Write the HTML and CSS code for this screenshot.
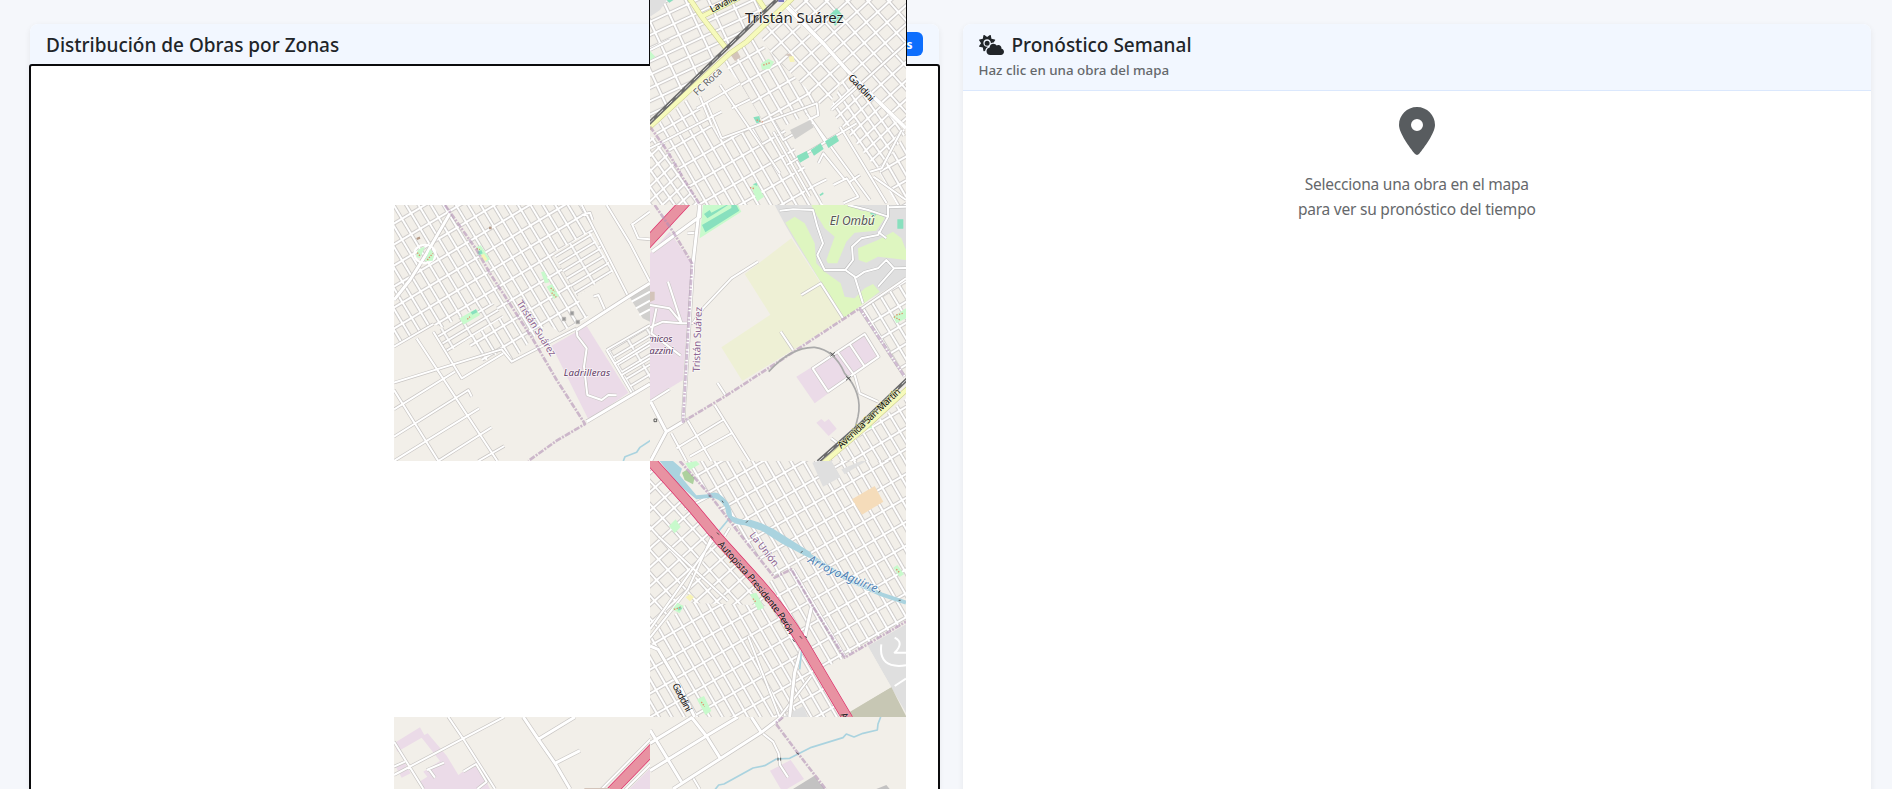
FILE: index.html
```html
<!DOCTYPE html>
<html lang="es">
<head>
<meta charset="utf-8">
<title>Distribución de Obras por Zonas</title>
<link rel="stylesheet" href="styles.css">
</head>
<body>
<svg class="defs" width="0" height="0" aria-hidden="true">
  <defs>
    <pattern id="blocks" width="33" height="62" patternUnits="userSpaceOnUse" patternTransform="rotate(-30)"><rect class="gap" width="33" height="62"/><rect class="block" x="4.500" y="4.500" width="24" height="53"/></pattern>
    <pattern id="blocks-b" width="32" height="54" patternUnits="userSpaceOnUse" patternTransform="translate(8 10) rotate(-31)"><rect class="gap" width="32" height="54"/><rect class="block" x="4.500" y="4.500" width="23" height="45"/></pattern>
    <pattern id="squares" width="46" height="42" patternUnits="userSpaceOnUse" patternTransform="rotate(-42)"><rect class="gap" width="46" height="42"/><rect class="block" x="4.500" y="4.500" width="37" height="33"/></pattern>
    <pattern id="small" width="30" height="33" patternUnits="userSpaceOnUse" patternTransform="rotate(-43) skewX(-8)"><rect class="gap" width="30" height="33"/><rect class="block" x="4.500" y="4.500" width="21" height="24"/></pattern>
    <pattern id="wide" width="62" height="36" patternUnits="userSpaceOnUse" patternTransform="rotate(-25)"><rect class="gap" width="62" height="36"/><rect class="block" x="4.500" y="4.500" width="53" height="27"/></pattern>
    <pattern id="thin" width="66" height="25" patternUnits="userSpaceOnUse" patternTransform="rotate(-31)"><rect class="gap" width="66" height="25"/><rect class="block" x="4" y="4" width="58" height="17"/></pattern>

    <path id="roads-a" d="M430 10L500 80L550 130L620 210L700 290L798 385"/>
    <path id="lanes-a" d="M30 150L90 120M170 325L300 250M200 310L245 415M245 415L530 310L535 345L505 360M275 325L330 298M180 290L215 375M30 445L245 335M390 350L430 420L520 368L555 425M240 255L420 520M500 340L690 600M575 330L798 130M600 380L740 610M440 495L650 370M690 515L725 505L785 390M700 530L798 600M535 490L550 460L615 540M580 555L620 535L655 590L610 610M630 545L660 525M520 558L560 538M400 395L510 590"/>
    <path id="roads-b" d="M180 40L110 160L60 240L12 300M780 250L715 290L560 390M780 552L590 665"/>
    <path id="lanes-b" d="M560 390L562 408L590 445L582 500L592 585L635 600L655 585L680 586M12 440L130 372M12 548L335 448L365 485L560 385M12 628L195 515M12 710L235 570L245 590M12 783L268 625M145 783L305 682M265 783L343 738M80 415L322 783M12 570L145 783M130 395L215 535L340 460M575 45L600 38L608 60M650 15L720 130L780 245M575 15L715 290M725 70L745 115L780 118M725 75L780 35M610 290L625 285L645 330M650 450L725 578M650 450L780 375M675 490L780 425M695 525L780 475"/>
    <path id="roads-c" d="M155 15L135 190L105 665L55 695L8 783M8 605L55 695M12 155L155 50L155 15"/>
    <path id="lanes-c" d="M135 370L165 325L250 235L330 185M135 370L100 370L45 365L6 382M60 245L100 368M6 315L65 325L100 368M6 605L65 568M98 467L10 400L25 325M118 100L145 98M460 285L518 250L585 355M398 395L435 450M208 548L232 585M494 505L650 402L692 470L540 575ZM570 458L618 525M605 432L650 500M200 615L305 783M115 655L190 783M70 700L115 783M85 745L225 660M125 770L250 700M550 715L575 735M620 525L635 580L690 605M635 330L774 235M635 325L770 530"/>
    <path id="park-c" d="M395 32L435 28L495 30L508 80L525 130L508 165L530 210L592 210L620 230L645 310M592 210L615 180L612 140L640 115L690 105L720 50L720 15M620 235L650 215L690 205L715 180L738 205L690 260M738 205L774 204M690 95L715 115M600 15L660 30L720 50M720 22L774 20"/>
    <path id="roads-d" d="M6 570L30 580L95 690L140 783M490 455L470 545L440 650L425 783"/>
    <path id="lanes-d" d="M190 245L120 400L6 545M200 245L6 520M30 240L240 435M190 245L410 460M245 215L230 240M435 340L590 600M470 545L600 783M395 783L490 660M110 160L185 120M300 540L395 783"/>
    <path id="lanes-e" d="M175 21L225 95L315 237M12 195L342 21M12 95L100 237M12 170L45 155M115 175L135 203M110 180L162 158M220 185L258 162L290 215L262 237"/>
    <path id="roads-e" d="M400 21L445 88L495 160L540 237M445 88L555 21M495 160L570 122"/>
    <path id="roads-f" d="M6 182L175 78L270 21M75 237L340 67L400 21M130 21L175 78L215 142M6 60L100 215M6 100L135 21M310 21L340 67"/>
    <path id="lanes-f" d="M135 203L155 237M340 67L375 95L392 130L396 165L420 202"/>
  </defs>
</svg>

<main class="dashboard">
  <section class="card">
    <header class="card-header">
      <h2 class="card-title title-map">Distribución de Obras por Zonas</h2>
      <span class="badge">s</span>
    </header>
    <div class="map" tabindex="0">
      <div class="spill"></div>

      <svg class="tile tile-a" viewBox="30 -153 768 768">
        <rect class="land" x="30" y="-153" width="768" height="768"/>
        <path fill="url(#wide)" d="M30 0H410L30 360Z"/>
        <path fill="url(#squares)" d="M440 0H798V380L600 200L440 20Z"/>
        <path fill="url(#squares)" d="M430 30L620 210L560 330L420 200L350 90Z"/>
        <path fill="url(#blocks)" d="M250 190L340 110L535 300L500 345L390 400L300 250Z"/>
        <path fill="url(#small)" d="M620 210L798 395L720 520L570 330Z"/>
        <path fill="url(#blocks)" d="M40 385L150 290L215 375L245 415L410 345L540 590L550 615H180Z"/>
        <path fill="url(#small)" d="M30 410L70 420L180 615H30Z"/>
        <path fill="url(#blocks)" d="M720 520L798 400V615H770Z"/>
        <path class="gray" d="M30 -20H95L60 30L30 50Z"/>
        <use href="#lanes-a" class="lane-case"/><use href="#lanes-a" class="lane"/>
        <use href="#roads-a" class="road-case"/><use href="#roads-a" class="road wide"/>
        <path class="teal" d="M80 0H100L88 8ZM568 45L590 25L612 50L585 78ZM470 468L500 453L508 472L480 488ZM512 450L542 430L551 447L522 467ZM555 424L588 404L597 423L565 444ZM538 584L549 577L551 582L541 588Z"/>
        <path class="garden" d="M30 153L46 170L30 180ZM362 192L385 176L402 185L390 206L366 209ZM333 560L350 550L372 590L352 604Z"/>
        <path class="teal" d="M340 352L358 348L362 366L350 370ZM338 553L350 548L352 558Z"/>
        <path class="speckle" d="M370 195L392 188M350 360L368 366M330 563L344 566"/>
        <path class="built" d="M272 165L290 150L302 172L285 183ZM435 165L450 160L458 172Z"/>
        <path class="darkgray" d="M450 390L510 360L521 382L465 418Z"/>
        <path class="yellow-case" d="M145 -10L185 50L262 150M185 50L300 -8M350 -10L380 35M25 385L270 160L320 125L460 -8"/>
        <path class="yellow" d="M145 -10L185 50L262 150M185 50L300 -8M350 -10L380 35M25 385L270 160L320 125L460 -8"/>
        <path class="rail" d="M25 372L420 -10"/><path class="rail-dash" d="M25 372L420 -10"/>
        <path class="station" d="M415 -5H432V6H415Z"/>
        <path class="border" d="M30 380L80 450L130 535L180 615"/>
        <path class="sand" d="M446 170L460 168L464 185L450 186Z"/>
        <text class="city" x="315" y="69" textLength="296">Tristán Suárez</text>
        <text class="street-name" transform="translate(216 38) rotate(-27)" textLength="86">Lavalle</text>
        <text class="rail-name" transform="translate(172 289) rotate(-44)" textLength="106">FC Roca</text>
        <text class="street-name" transform="translate(623 234) rotate(47)" textLength="99">Gaddini</text>
      </svg>

      <svg class="tile tile-b" viewBox="12 15 768 768">
        <rect class="land" x="12" y="15" width="768" height="768"/>
        <path fill="url(#blocks-b)" d="M12 15H575L670 215L560 290L595 350L510 398L470 370L365 485L340 450L280 485L235 430L215 405L130 372L12 440Z"/>
        <path fill="url(#thin)" d="M490 160L600 95L670 215L560 290ZM130 400L260 320L310 310L340 350L170 460Z"/>
        <path fill="url(#thin)" d="M650 450L780 372V550L725 578Z"/>
        <path class="darkgray" d="M718 290L780 258V365L758 355Z"/>
        <path class="purple" d="M485 437L590 378L715 578L596 660Z"/>
        <use href="#lanes-b" class="lane-case"/><use href="#lanes-b" class="lane"/>
        <use href="#roads-b" class="road-case"/><use href="#roads-b" class="road"/>
        <ellipse class="lane" cx="105" cy="162" rx="32" ry="28"/>
        <path class="garden" d="M105 140Q75 145 80 172L90 174ZM120 148Q137 160 128 182L104 184ZM258 142L272 136L300 178L288 187ZM453 217L463 214L478 247L465 250ZM470 260L486 252L507 288L492 297ZM209 355L258 327L270 345L220 374Z"/>
        <path class="teal" d="M262 155L274 150L278 160L267 165ZM242 337L258 328L262 337L247 344Z"/>
        <path class="sand" d="M272 166L282 162L292 178L285 184Z"/>
        <path class="speckle" d="M82 158L90 168M112 180L128 160M260 146L270 149M482 264L495 275M485 278L499 292M232 358L240 350"/>
        <path class="pit" d="M517 352H527V362H517ZM541 335H551V345H541ZM558 361H568V371H558Z"/>
        <path class="lane" d="M725 305L780 275M738 325L780 302M748 345L780 328"/>
        <path class="dot" d="M80 117L90 113M297 84H305"/>
        <path class="border" d="M165 15L260 150L300 220L430 420L500 540L585 672L500 722L415 783"/>
        <path class="water-line" d="M700 783L705 770L740 757L750 742L782 721"/>
        <text class="district" transform="translate(379 309) rotate(57.5)" textLength="192">Tristán Suárez</text>
        <text class="zone" x="521" y="528" textLength="139">Ladrilleras</text>
      </svg>

      <svg class="tile tile-c" viewBox="6 15 768 768">
        <rect class="land" x="6" y="15" width="768" height="768"/>
        <path class="gray" d="M380 15H774V233L645 310L590 355L505 225L435 115L412 75Z"/>
        <path class="green" d="M412 68L440 50L470 70L500 130L505 190L530 215L578 250L590 290L620 295L650 265L675 252L695 275L585 356L510 232ZM490 15H600L640 32L690 35L710 55L685 92L620 98L595 125L568 190L540 190L535 180L560 110L530 85L500 35ZM630 145L690 120L735 95L760 115L774 150V180L730 175L690 170L655 188L632 180Z"/>
        <path class="farm" d="M290 222L430 115L515 245L585 355L435 450L283 543L220 442L367 344Z"/>
        <path class="purple" d="M6 160L65 95L130 190L105 540L6 600Z"/>
        <path class="purple" d="M445 530L650 402L692 470L500 610ZM505 668L520 657L530 666L542 657L566 686L542 708Z"/>
        <path fill="url(#blocks-b)" d="M635 325L774 235V525Z"/>
        <path fill="url(#blocks-b)" d="M774 595V783H545Z"/>
        <path class="garden" d="M165 15H270L280 35L155 115ZM735 350L774 325V355L745 370ZM652 672L668 650L672 685L655 685Z"/>
        <path class="teal" d="M168 42L185 30L190 38L235 15H240L205 38L178 55ZM162 75L250 24L250 15H265L274 32L172 97ZM748 58H766V86H748ZM665 40L690 35L680 50Z"/>
        <path class="built" d="M6 275H20V300L6 306Z"/>
        <use href="#park-c" class="park-case"/><use href="#park-c" class="park"/>
        <use href="#lanes-c" class="lane-case"/><use href="#lanes-c" class="lane"/>
        <use href="#roads-c" class="road-case"/><use href="#roads-c" class="road"/>
        <path class="highway-case" d="M-10 138L122 -5"/><path class="highway" d="M-10 138L122 -5"/>
        <path class="border" d="M20 15L75 95L132 190L120 400L105 665L230 590L430 460L635 325L770 530"/>
        <path class="siding" d="M362 515Q430 440 500 442Q560 450 590 520Q645 580 630 650L620 690"/>
        <path class="yellow-case" d="M525 790L660 675L780 565"/><path class="yellow" d="M525 790L660 675L780 565"/>
        <path class="rail" d="M510 785L640 670L780 535"/><path class="rail-dash" d="M510 785L640 670L780 535"/>
        <path class="cross" d="M547 457L561 469M561 457L547 469M594 529L608 541M608 529L594 541M18 657H26V665H18Z"/>
        <path class="speckle" d="M738 350L756 360M745 345L765 340"/>
        <text class="zone large" x="545" y="74" textLength="135">El Ombú</text>
        <text class="zone" x="73" y="427" text-anchor="end">Químicos</text>
        <text class="zone" x="75" y="463" text-anchor="end">Mazzini</text>
        <text class="district" transform="translate(155 517) rotate(-88)" textLength="196">Tristán Suárez</text>
        <text class="street-name yellow-halo" transform="translate(580 747) rotate(-43.5)" textLength="247">Avenida San Martín</text>
      </svg>

      <svg class="tile tile-d" viewBox="6 15 768 768">
        <rect class="land" x="6" y="15" width="768" height="768"/>
        <path fill="url(#blocks)" d="M110 15H774V500L590 605L435 340L385 365L240 190Z"/>
        <path fill="url(#squares)" d="M6 35L200 250L120 400L6 540Z"/>
        <path fill="url(#squares)" d="M200 250L400 450L250 500L90 470Z"/>
        <path fill="url(#blocks)" d="M6 540L120 440L400 450L600 783H6Z"/>
        <path fill="url(#blocks)" d="M350 385L435 340L590 605L500 650Z"/>
        <path class="gray" d="M493 20L510 15H550L578 63L525 92ZM580 40L640 15H655L590 55ZM405 783L465 750L480 783ZM660 570L774 505V770L730 695Z"/>
        <path class="khaki" d="M605 768L730 693L774 780V783H612Z"/>
        <path class="orange" d="M612 130L680 90L706 137L642 176Z"/>
        <path class="land" d="M530 645L660 572L730 693L605 766Z"/>
        <use href="#lanes-d" class="lane-case"/><use href="#lanes-d" class="lane"/>
        <use href="#roads-d" class="road-case"/><use href="#roads-d" class="road"/>
        <path class="garden" d="M112 22L145 15L155 25L125 42ZM63 210L83 190L98 213L80 232ZM306 415L325 410L348 455L330 463ZM147 730L168 720L190 765L172 777ZM73 460L88 440L107 450L95 472ZM736 335L748 327L768 355L755 363Z"/>
        <path class="wood" d="M102 50L115 42L140 65L135 85L110 72Z"/>
        <path class="sand" d="M113 424L126 414L138 424L126 436Z"/>
        <path class="teal" d="M88 455L98 450L102 458L92 464Z"/>
        <path class="speckle" d="M78 460L100 454M315 428L325 440M160 738L170 752M745 340L755 350"/>
        <path class="park" d="M740 545Q770 560 740 590L774 590M700 565Q690 640 774 628M740 690L774 668"/>
        <path class="water" d="M35 15H75L102 38L95 58L145 118L180 115Q205 103 218 118Q250 140 252 180Q280 195 310 192Q360 205 410 240L490 290L482 305L400 262L340 224L290 208Q235 205 232 155Q215 125 190 125L145 130L90 85Z"/>
        <path class="water-line" d="M240 192L210 228M465 540L455 640"/>
        <path class="river" d="M480 295L550 340L600 370L700 415L774 440"/>
        <path class="border" d="M95 15L180 110L280 240L380 365L430 340L500 460L590 605L774 497"/>
        <path class="highway-case" d="M0 5L130 150L215 252L320 368Q400 455 470 570L600 790"/>
        <path class="highway" d="M0 5L130 150L215 252L320 368Q400 455 470 570L600 790"/>
        <path class="cross" d="M188 240L196 248M206 230L214 236M434 550L440 558M455 540L462 548M472 540L476 546M182 120H188M222 134L226 140M294 200L300 194M458 290L464 286M692 410L696 404M752 433H758"/>
        <text class="district" transform="translate(303 238) rotate(52)" textLength="122">La Unión</text>
        <text class="water-name" transform="translate(478 318) rotate(27)" textLength="108">Arroyo</text>
        <text class="water-name" transform="translate(578 365) rotate(23)" textLength="114">Aguirre</text>
        <text class="street-name" transform="translate(208 266) rotate(48.5)" textLength="124">Autopista</text>
        <text class="street-name" transform="translate(296 364) rotate(51)" textLength="140">Presidente</text>
        <text class="street-name" transform="translate(387 477) rotate(58)" textLength="70">Perón</text>
        <text class="street-name" transform="translate(72 688) rotate(62)" textLength="92">Gaddini</text>
        <text class="street-name" transform="translate(576 776) rotate(62)">Autopista</text>
      </svg>

      <svg class="tile tile-e" viewBox="12 21 768 768">
        <rect class="land" x="12" y="21" width="768" height="768"/>
        <path class="purple" d="M12 100L90 52L103 75L113 70L170 137L205 195L260 155L300 237H95L88 215L112 200L100 185L150 153L95 83L22 125ZM18 172L45 160L62 190L35 203ZM780 175V260H695Z"/>
        <use href="#lanes-e" class="lane-case"/><use href="#lanes-e" class="lane"/>
        <use href="#roads-e" class="road-case"/><use href="#roads-e" class="road"/>
        <path class="lane-case" d="M632 240L790 80M705 240L790 155"/><path class="lane" d="M632 240L790 80M705 240L790 155"/>
        <path class="highway-case" d="M640 270L800 105"/><path class="highway" d="M640 270L800 105"/>
        <path class="built" d="M583 234H660V240H583Z"/>
      </svg>

      <svg class="tile tile-f" viewBox="6 21 768 768">
        <rect class="land" x="6" y="21" width="768" height="768"/>
        <path class="purple" d="M366 182L428 150L468 207L412 240H400ZM6 172V240Z"/>
        <path class="industrial" d="M435 237L498 198L530 237ZM685 237L715 225L725 237Z"/>
        <use href="#lanes-f" class="lane-case"/><use href="#lanes-f" class="lane"/>
        <use href="#roads-f" class="road-case"/><use href="#roads-f" class="road"/>
        <path class="water-line" d="M200 240L212 225L228 222L315 174L350 167L385 147L425 145L490 112L585 83L595 72L618 81L645 70L688 60L690 42L698 21"/>
        <path class="border" d="M405 21L383 40L450 130L535 240"/>
        <path class="cross" d="M390 143V152M398 143V152M445 128L453 133"/>
      </svg>
    </div>
  </section>

  <section class="card">
    <header class="card-header stacked">
      <h2 class="card-title">
        <svg class="cloud-sun" viewBox="0 0 640 512"><path d="M294.200 1.200c5.100 2.100 8.700 6.700 9.600 12.100l14.100 84.700 84.700 14.100c5.400 .9 10 4.500 12.100 9.600s1.500 10.900-1.600 15.400l-38.500 55c-2.200-.1-4.400-.2-6.700-.2-23.300 0-45.100 6.200-64 17.100l0-1.100c0-53-43-96-96-96s-96 43-96 96 43 96 96 96c8.100 0 15.900-1 23.400-2.900-36.600 18.100-63.300 53.100-69.800 94.900l-24.400 17c-4.500 3.200-10.300 3.800-15.400 1.600s-8.700-6.700-9.600-12.100L98.100 317.900 13.400 303.800c-5.400-.9-10-4.500-12.100-9.600s-1.500-10.900 1.600-15.400L52.500 208 2.900 137.200c-3.200-4.500-3.800-10.300-1.600-15.400s6.700-8.700 12.100-9.600L98.100 98.100l14.100-84.700c.9-5.400 4.500-10 9.600-12.100s10.900-1.500 15.400 1.600L208 52.500 278.800 2.900c4.500-3.200 10.300-3.800 15.400-1.700zM144 208a64 64 0 1 1 128 0 64 64 0 1 1-128 0zM639.900 431.900c0 44.200-35.800 80-80 80H288c-53 0-96-43-96-96 0-47.600 34.600-87 80-94.600V320c0-53 43-96 96-96 34.900 0 65.400 18.600 82.200 46.400 13-9.100 28.800-14.400 45.800-14.400 44.200 0 80 35.800 80 80 0 5.900-.6 11.700-1.900 17.200 37.400 6.700 65.800 39.400 65.800 78.700z"/></svg>
        <span>Pronóstico Semanal</span>
      </h2>
      <p class="card-subtitle">Haz clic en una obra del mapa</p>
    </header>
    <div class="empty">
      <svg class="pin" viewBox="0 0 384 512"><path fill-rule="evenodd" d="M215.700 499.200C267 435 384 279.400 384 192 384 86 298 0 192 0S0 86 0 192c0 87.400 117 243 168.300 307.200 12.300 15.300 35.100 15.300 47.400 0zM192 128a64 64 0 1 1 0 128 64 64 0 1 1 0-128z"/></svg>
      <p class="empty-text">Selecciona una obra en el mapa<br>para ver su pronóstico del tiempo</p>
    </div>
  </section>
</main>
</body>
</html>
```
FILE: styles.css
```css
* { box-sizing: border-box; }
html, body { height: 100%; }
body {
  margin: 0;
  overflow: hidden;
  background: #f5f7fb;
  color: #212529;
  font-family: "Noto Sans", "Open Sans", sans-serif;
}
.defs { position: absolute; }
.dashboard {
  display: grid;
  grid-template-columns: 1fr 1fr;
  grid-auto-rows: 836px;
  gap: 24px;
  height: 100vh;
  overflow: hidden;
  padding: 24px 21px 0 30px;
}
.card {
  display: flex;
  flex-direction: column;
  background: #fff;
  border-radius: 8px;
  box-shadow: 0 2px 6px rgba(0, 0, 0, .07);
}
.card-header {
  display: flex;
  align-items: center;
  justify-content: space-between;
  height: 41px;
  padding: 0 16px;
  background: #f2f7ff;
  border-bottom: 1px solid #dbe8fd;
  border-radius: 8px 8px 0 0;
}
.card-header.stacked {
  flex-direction: column;
  align-items: flex-start;
  justify-content: flex-start;
  height: 67px;
  padding-top: 9px;
}
.card-title {
  display: flex;
  align-items: center;
  gap: 8px;
  margin: 0;
  font-size: 19px;
  font-weight: 500;
  line-height: 24px;
  white-space: nowrap;
}
.title-map { padding-top: 2px; }
.cloud-sun { width: 25px; height: 20px; fill: #212529; }
.card-subtitle {
  margin: 0;
  padding-top: 3px;
  color: #65686c;
  font-size: 13.350px;
  font-weight: 500;
  line-height: 20px;
}
.badge {
  width: 60px;
  height: 24px;
  padding-right: 10px;
  border-radius: 6px;
  background: #0d6efd;
  color: #fff;
  font-size: 12px;
  font-weight: 700;
  line-height: 25px;
  text-align: right;
}
.map {
  position: relative;
  flex: 1;
  background: #fff;
  border-radius: 2px;
  outline: 2px solid #0b0b0d;
  outline-offset: -1px;
}
.spill {
  position: absolute;
  left: 619px;
  top: -67px;
  width: 258px;
  height: 68px;
  background: #0b0b0d;
}
.tile { position: absolute; width: 256px; height: 256px; overflow: hidden; }
.tile-a { left: 620px; top: -116px; }
.tile-b { left: 364px; top: 140px; }
.tile-c { left: 620px; top: 140px; }
.tile-d { left: 620px; top: 396px; }
.tile-e { left: 364px; top: 652px; }
.tile-f { left: 620px; top: 652px; }

.empty { display: flex; flex-direction: column; align-items: center; padding-top: 16px; }
.pin { width: 36px; height: 48px; fill: #585c5f; }
.empty-text { margin: 17px 0 0; color: #65686b; font-size: 15.500px; letter-spacing: -.22px; line-height: 25px; text-align: center; }

.land { fill: #f2efe9; }
.gap { fill: #fff; }
.block { fill: #f2efe9; stroke: #c8c5c3; stroke-width: 2.500; }
.gray { fill: #dfdfdf; }
.darkgray { fill: #d1d0ce; }
.industrial { fill: #c3c2c2; }
.purple { fill: #ebdbe8; }
.green { fill: #def6c0; }
.farm { fill: #eef0d5; }
.garden { fill: #c8facc; }
.teal { fill: #88e0be; }
.wood { fill: #add19e; }
.sand { fill: #f7f3b5; }
.orange { fill: #f5dcba; }
.khaki { fill: #c7c7b4; }
.built { fill: #d3c4ba; }
.station { fill: #7a78b8; }
.water { fill: #aad3df; }
.lane-case, .lane, .road-case, .road, .park-case, .park, .yellow-case, .yellow,
.rail, .rail-dash, .border, .highway, .highway-case, .water-line, .river, .siding,
.cross, .speckle, .dot { fill: none; stroke-linejoin: round; }
.lane-case { stroke: #c9c6c4; stroke-width: 10; }
.lane { stroke: #fff; stroke-width: 6; }
.road-case { stroke: #c9c6c4; stroke-width: 13; }
.road { stroke: #fff; stroke-width: 9; }
.road.wide { stroke-width: 11; }
.park-case { stroke: #bbb; stroke-width: 9; }
.park { stroke: #fff; stroke-width: 6; }
.yellow-case { stroke: #c9cb8c; stroke-width: 16; }
.yellow { stroke: #f6fabb; stroke-width: 13; }
.rail { stroke: #6b6b6b; stroke-width: 11; }
.rail-dash { stroke: #eee; stroke-width: 2.500; stroke-dasharray: 24 14; }
.border { stroke: #b391b5; stroke-opacity: .6; stroke-width: 8; stroke-dasharray: 18 4 6 4; }
.highway-case { stroke: #dc2a67; stroke-width: 33; }
.highway { stroke: #e892a2; stroke-width: 29; }
.water-line { stroke: #aad3df; stroke-width: 5; }
.river { stroke: #aad3df; stroke-width: 12; }
.siding { stroke: #aaa; stroke-width: 5; }
.cross { stroke: #444; stroke-width: 2.500; }
.speckle { stroke: #e28b6c; stroke-width: 4; stroke-dasharray: 4 4; }
.pit { fill: #999; stroke: #b5b3b1; stroke-width: 3; }
.dot { stroke: #b59a88; stroke-width: 7; }

.tile text { font-family: "Noto Sans", sans-serif; paint-order: stroke; stroke: rgba(255, 255, 255, .65); stroke-width: 5px; stroke-linejoin: round; }
.tile .city { fill: #222; font-size: 45px; }
.tile .street-name { fill: #111; font-size: 29px; stroke-width: 3px; stroke: rgba(255, 255, 255, .3); }
.tile .yellow-halo { stroke: #f6fabb; }
.tile .rail-name { fill: #666; font-size: 30px; }
.tile .district { fill: #8b6290; font-size: 30px; }
.tile .zone { fill: #5f3a63; font-size: 29px; font-style: italic; letter-spacing: -.5px; }
.tile .zone.large { fill: #555; font-size: 36px; }
.tile .water-name { fill: #4d80b3; font-size: 35px; font-style: italic; }
```
